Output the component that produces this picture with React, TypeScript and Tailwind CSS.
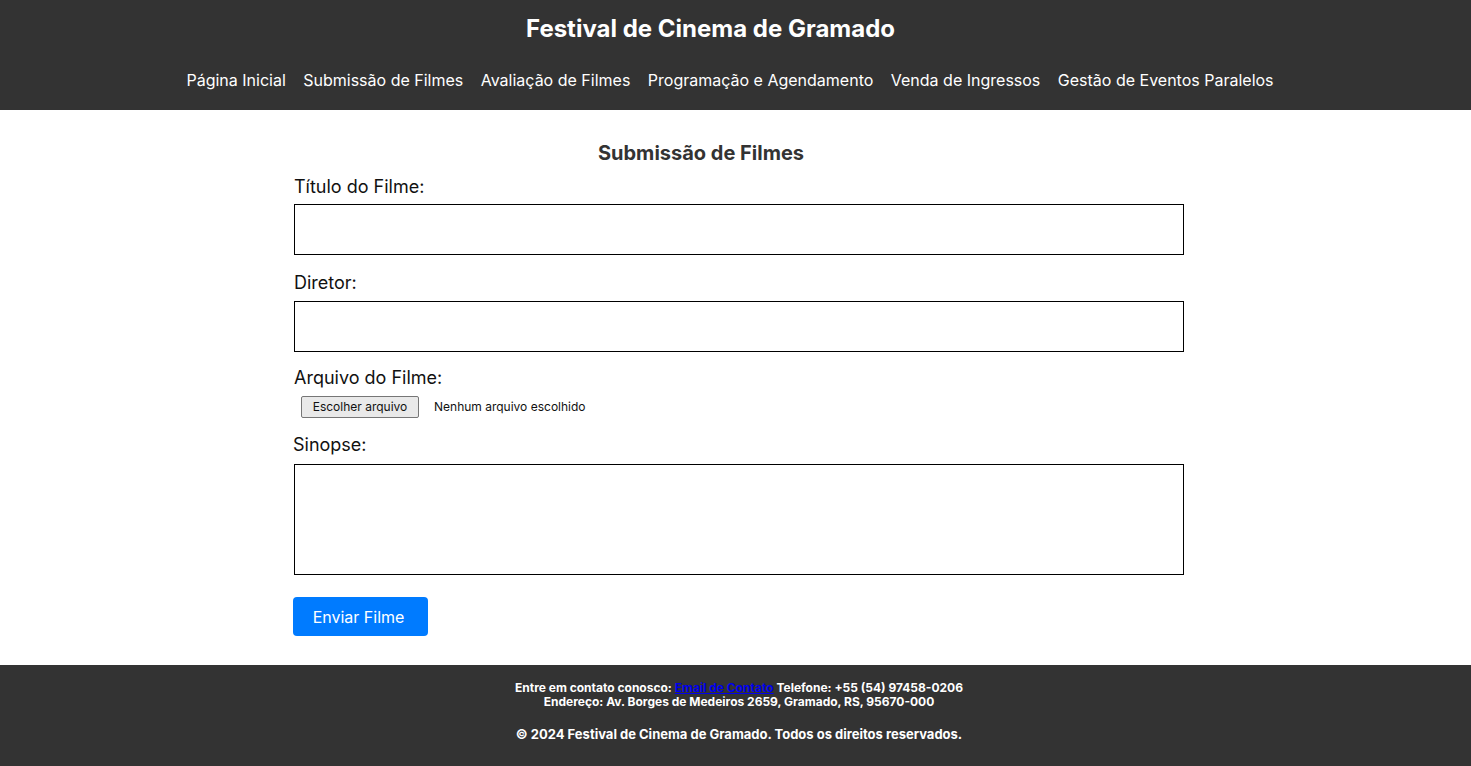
const navItems = [
  "Página Inicial",
  "Submissão de Filmes",
  "Avaliação de Filmes",
  "Programação e Agendamento",
  "Venda de Ingressos",
  "Gestão de Eventos Paralelos",
];

export default function App() {
  return (
    <div className="min-h-[766px] flex flex-col bg-white text-[#111] font-['Inter','Noto_Sans',sans-serif]">
      {/* Header */}
      <header className="bg-[#333333] text-white pt-[13px] pb-[18px]">
        <h1 className="pr-[50px] text-center text-[24px] leading-[32px] font-bold">Festival de Cinema de Gramado</h1>
        <nav className="mt-[23px] flex justify-center gap-[17.5px] pr-[11px] text-[16px] leading-[24px]">
          {navItems.map((item) => (
            <a key={item} href="#" className="text-white">
              {item}
            </a>
          ))}
        </nav>
      </header>

      {/* Form */}
      <main className="flex justify-center pl-[6px] pt-[29px] pb-[29px]">
        <div className="w-[891px]">
          <h2 className="pr-[75px] text-center text-[20px] leading-[28px] font-bold text-[#333]">Submissão de Filmes</h2>

          <label className="block pl-[1px] mt-[6px] text-[18px] leading-[28px]">Título do Filme:</label>
          <div className="mt-[3px] ml-[1px] h-[51px] w-[890px] border border-black" />

          <label className="block pl-[1px] mt-[14px] text-[18px] leading-[28px]">Diretor:</label>
          <div className="mt-[4px] ml-[1px] h-[51px] w-[890px] border border-black" />

          <label className="block pl-[1px] mt-[12px] text-[18px] leading-[28px]">Arquivo do Filme:</label>
          <div className="mt-[4px] flex items-center pl-[8px] text-[13px] leading-[16px]">
            <span className="h-[22px] w-[118px] flex items-center justify-center border border-[#767676] bg-[#e9e9e9] rounded-[2px] text-[12px]">
              Escolher arquivo
            </span>
            <span className="ml-[15px] text-[12px]">Nenhum arquivo escolhido</span>
          </div>

          <label className="block mt-[13px] text-[18px] leading-[28px]">Sinopse:</label>
          <div className="mt-[5px] ml-[1px] h-[111px] w-[890px] border border-black" />

          <button className="mt-[22px] h-[39px] w-[135px] pr-[4px] rounded-[4px] bg-[#007bff] text-white text-[16px]">
            Enviar Filme
          </button>
        </div>
      </main>

      {/* Footer */}
      <footer className="flex-1 bg-[#333333] text-white text-center font-bold pl-[7px] pt-[16px] pb-[20px]">
        <p className="text-[12px] leading-[14px]">
          Entre em contato conosco:{" "}
          <a href="#" className="text-[#0000ee] underline">
            Email de Contato
          </a>{" "}
          Telefone: +55 (54) 97458-0206
          <br />
          Endereço: Av. Borges de Medeiros 2659, Gramado, RS, 95670-000
        </p>
        <p className="mt-[17px] text-[13px] leading-[16px]">© 2024 Festival de Cinema de Gramado. Todos os direitos reservados.</p>
      </footer>
    </div>
  );
}
